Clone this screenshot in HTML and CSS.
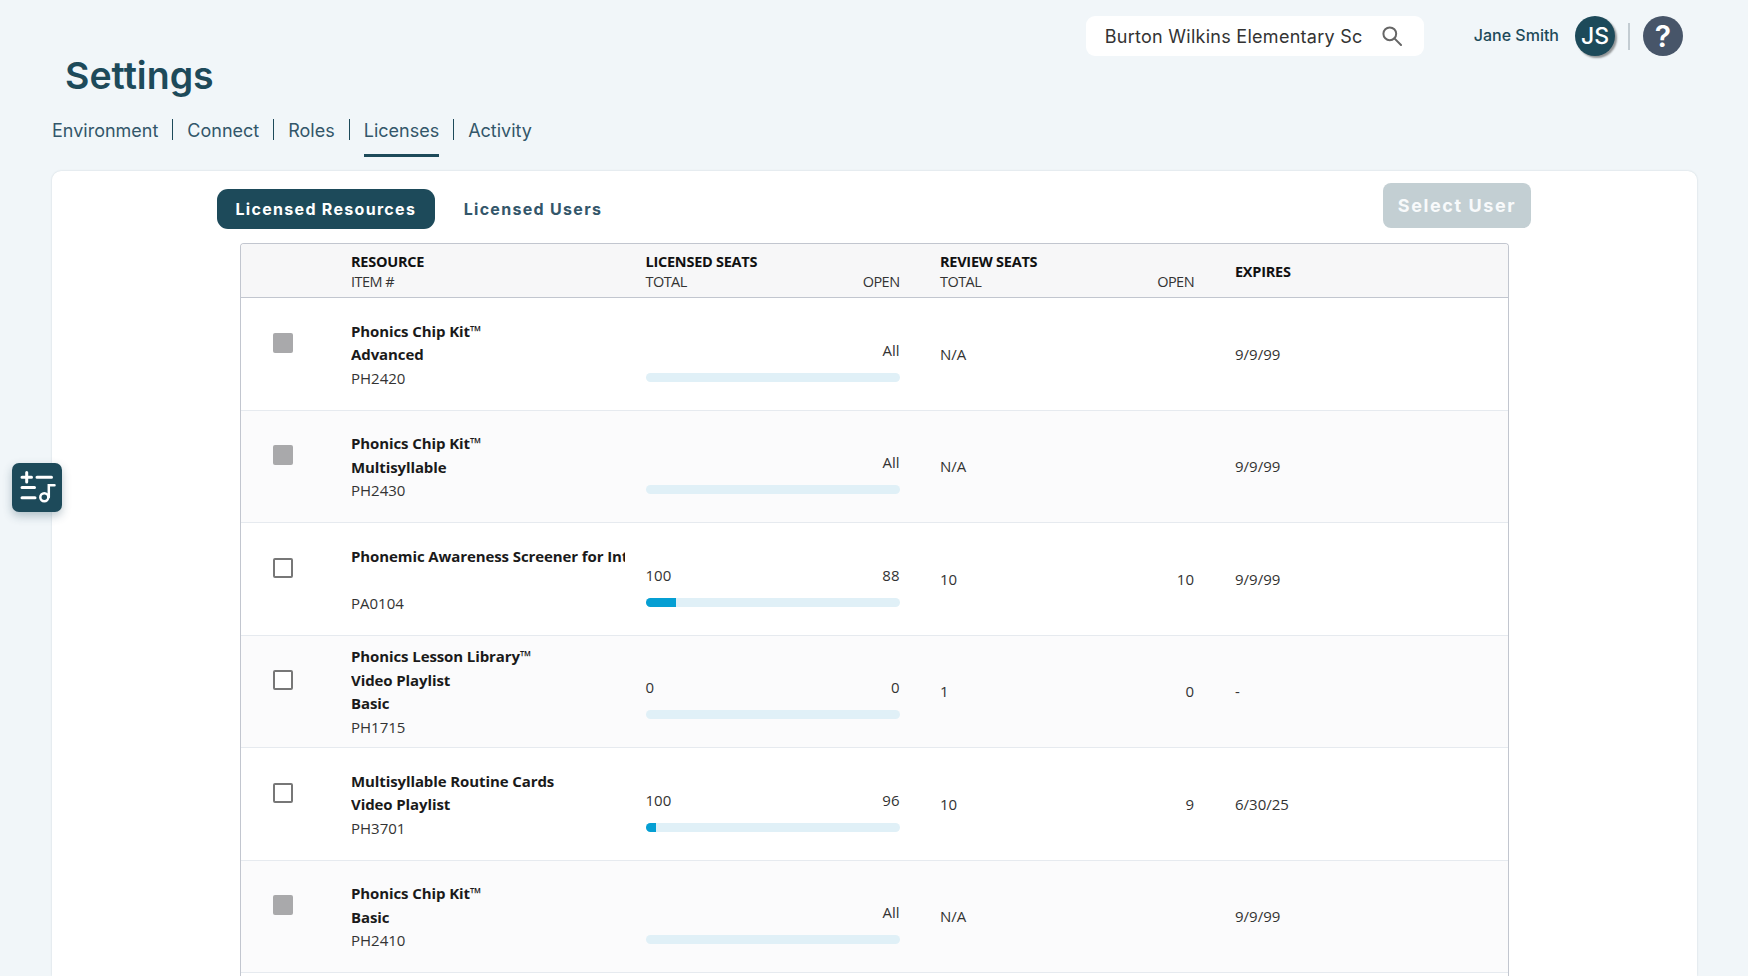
FILE: index.html
```html
<!DOCTYPE html>
<html lang="en">
<head>
<meta charset="utf-8">
<title>Settings</title>
<link rel="stylesheet" href="styles.css">
</head>
<body>
<div class="page">
  <header class="topbar">
    <div class="search">
      <span class="search-text">Burton Wilkins Elementary Sc</span>
      <svg class="search-icon" width="20" height="20" viewBox="0 0 20 20" fill="none" stroke="#666" stroke-width="2"><circle cx="7.800" cy="7.800" r="6.400"/><path d="M12.400 12.400 19 19" stroke-linecap="round"/></svg>
    </div>
    <span class="user-name">Jane Smith</span>
    <span class="avatar">JS</span>
    <span class="divider"></span>
    <span class="help">?</span>
  </header>
  <h1 class="title">Settings</h1>
  <nav class="tabs">
    <a class="tab">Environment</a>
    <a class="tab">Connect</a>
    <a class="tab">Roles</a>
    <a class="tab tab-active">Licenses</a>
    <a class="tab">Activity</a>
  </nav>
  <main class="card">
    <div class="toolbar">
      <div class="segments">
        <span class="segment segment-active">Licensed Resources</span>
        <span class="segment">Licensed Users</span>
      </div>
      <button class="select-user">Select User</button>
    </div>
    <div class="table">
      <div class="row head">
        <div></div>
        <div><div class="h-strong">RESOURCE</div><div class="h-sub">ITEM #</div></div>
        <div></div>
        <div><div class="h-strong">LICENSED SEATS</div><div class="pair h-sub"><span>TOTAL</span><span>OPEN</span></div></div>
        <div></div>
        <div><div class="h-strong">REVIEW SEATS</div><div class="pair h-sub"><span>TOTAL</span><span>OPEN</span></div></div>
        <div></div>
        <div class="h-strong">EXPIRES</div>
      </div>

      <div class="row item">
        <div class="check-cell"><span class="check check-locked"></span></div>
        <div class="res"><div class="name">Phonics Chip Kit™</div><div class="name">Advanced</div><div class="code">PH2420</div></div>
        <div></div>
        <div class="seats"><div class="pair"><span></span><span>All</span></div><div class="track"></div></div>
        <div></div>
        <div class="pair"><span>N/A</span><span></span></div>
        <div></div>
        <div>9/9/99</div>
      </div>

      <div class="row item">
        <div class="check-cell"><span class="check check-locked"></span></div>
        <div class="res"><div class="name">Phonics Chip Kit™</div><div class="name">Multisyllable</div><div class="code">PH2430</div></div>
        <div></div>
        <div class="seats"><div class="pair"><span></span><span>All</span></div><div class="track"></div></div>
        <div></div>
        <div class="pair"><span>N/A</span><span></span></div>
        <div></div>
        <div>9/9/99</div>
      </div>

      <div class="row item">
        <div class="check-cell"><span class="check"></span></div>
        <div class="res"><div class="name">Phonemic Awareness Screener for Intervention</div><div class="name name-empty"></div><div class="code">PA0104</div></div>
        <div></div>
        <div class="seats"><div class="pair"><span>100</span><span>88</span></div><div class="track"><div class="fill" style="width:12%"></div></div></div>
        <div></div>
        <div class="pair"><span>10</span><span>10</span></div>
        <div></div>
        <div>9/9/99</div>
      </div>

      <div class="row item">
        <div class="check-cell"><span class="check"></span></div>
        <div class="res"><div class="name">Phonics Lesson Library™</div><div class="name">Video Playlist</div><div class="name">Basic</div><div class="code">PH1715</div></div>
        <div></div>
        <div class="seats"><div class="pair"><span>0</span><span>0</span></div><div class="track"></div></div>
        <div></div>
        <div class="pair"><span>1</span><span>0</span></div>
        <div></div>
        <div>-</div>
      </div>

      <div class="row item">
        <div class="check-cell"><span class="check"></span></div>
        <div class="res"><div class="name">Multisyllable Routine Cards</div><div class="name">Video Playlist</div><div class="code">PH3701</div></div>
        <div></div>
        <div class="seats"><div class="pair"><span>100</span><span>96</span></div><div class="track"><div class="fill" style="width:4%"></div></div></div>
        <div></div>
        <div class="pair"><span>10</span><span>9</span></div>
        <div></div>
        <div>6/30/25</div>
      </div>

      <div class="row item">
        <div class="check-cell"><span class="check check-locked"></span></div>
        <div class="res"><div class="name">Phonics Chip Kit™</div><div class="name">Basic</div><div class="code">PH2410</div></div>
        <div></div>
        <div class="seats"><div class="pair"><span></span><span>All</span></div><div class="track"></div></div>
        <div></div>
        <div class="pair"><span>N/A</span><span></span></div>
        <div></div>
        <div>9/9/99</div>
      </div>
    </div>
  </main>
</div>
<button class="float-tool" aria-label="Tools">
  <svg width="50" height="49" viewBox="0 0 50 49" fill="none" stroke="#fff" stroke-width="3" stroke-linecap="round"><path d="M10 14.300h9.500M14.700 9.500v9.600M25 14.300h14.500M10 24.600h12.500M10 34.700h13"/><circle cx="32.300" cy="34.300" r="4" stroke-width="2.500"/><path d="M36.800 34V22.300h5.700" stroke-width="2.500"/></svg>
</button>
</body>
</html>
```
FILE: styles.css
```css
* { box-sizing: border-box; }
html, body { margin: 0; height: 100%; overflow: hidden; }
body { background: #f1f6f9; font-family: Inter, "Liberation Sans", sans-serif; color: #1d4a5a; }

.page { display: flex; flex-direction: column; height: 976px; padding: 0 51px 0 52px; }

.topbar { display: flex; align-items: center; justify-content: flex-end; padding: 16px 14px 0 0; }
.search { display: flex; align-items: center; width: 338px; height: 40px; padding: 0 22px 0 19px; margin-right: 50px; background: #fff; border-radius: 9px; }
.search-text { flex: 1; font-size: 18px; color: #333; white-space: nowrap; overflow: hidden; letter-spacing: .27px; }
.search-icon { flex: none; }
.user-name { font-size: 16px; font-weight: 500; color: #1d4a5a; margin: 0 16px 2px 0; }
.avatar { display: flex; align-items: center; justify-content: center; width: 40px; height: 40px; margin-right: 1px; border-radius: 50%; background: #1d4a5a; color: #fff; font-size: 23px; font-weight: 500; box-shadow: 2px 2px 2px rgba(0,0,0,.4); }
.divider { width: 2px; height: 27px; margin: 0 13px 0 12px; background: #c3ccd2; }
.help { display: flex; align-items: center; justify-content: center; width: 40px; height: 40px; border-radius: 50%; background: #475569; color: #fff; font-size: 30px; font-weight: 600; }

.title { margin: 0 0 0 13px; height: 40px; font-size: 37.500px; line-height: 40px; font-weight: 600; color: #1d4a5a; }

.tabs { display: flex; margin-top: 23px; padding-bottom: 31px; }
.tab { position: relative; height: 21px; line-height: 23px; padding-right: 14px; margin-right: 14px; font-size: 18px; color: #33566a; border-right: 1px solid #1d4a5a; }
.tab:last-child { border-right: 0; }
.tab-active::after { content: ""; position: absolute; left: 0; right: 14px; top: 35px; height: 3px; background: #1d4a5a; }

.card { flex: 1; display: flex; flex-direction: column; min-height: 0; padding: 12px 166px 0 165px; background: #fff; border-radius: 9px 9px 0 0; box-shadow: 0 0 2px rgba(30,60,80,.18); }

.toolbar { display: flex; align-items: flex-end; justify-content: space-between; height: 46px; flex: none; }
.segments { display: flex; align-items: center; gap: 28px; }
.segment { font-size: 16px; font-weight: 700; letter-spacing: 1.300px; color: #33566a; white-space: nowrap; }
.segment-active { display: flex; align-items: center; height: 40px; padding: 0 18.500px; margin-right: 1px; background: #1d4a5a; color: #fff; border-radius: 11px; }
.select-user { width: 148px; height: 45px; margin-bottom: 1px; border: 0; border-radius: 8px; background: #c3cfd3; color: #f8fafb; font-family: Inter, sans-serif; font-size: 18px; font-weight: 700; letter-spacing: 1.600px; }

.table { flex: 1; min-height: 0; margin: 14px 22px 0 23px; border: 1px solid #c2c6cf; border-bottom: 0; border-radius: 4px 4px 0 0; overflow: hidden; font-family: "Open Sans", sans-serif; font-size: 15px; color: #333; }

.row { display: grid; grid-template-columns: 110px 273.500px 21px 254px 40.500px 254px 41px 1fr; align-items: center; }
.head { height: 54px; padding-top: 2px; background: #f7f7f8; border-bottom: 1px solid #c2c6cf; line-height: 20px; font-size: 14.500px; }
.h-strong { font-weight: 700; color: #111; letter-spacing: -.25px; }
.h-sub { color: #333; letter-spacing: -.55px; }

.item { height: 112.500px; border-bottom: 1.500px solid #e6eaef; }
.item:nth-child(odd) { background: #fbfbfc; }

.check-cell { display: flex; padding: 0 0 22px 32px; }
.check { width: 20px; height: 20px; border: 2px solid #777; border-radius: 2px; background: #fff; }
.check-locked { border: 0; background: #a9a9ab; }

.res { min-width: 0; padding-top: 2px; line-height: 23.500px; }
.name { height: 23.500px; font-weight: 700; color: #1a1a1a; white-space: nowrap; overflow: hidden; letter-spacing: -.1px; }

.pair { display: flex; justify-content: space-between; }
.seats { padding-top: 14px; line-height: 20px; }
.track { height: 9px; margin-top: 13px; border-radius: 4.500px; background: #e0f0f7; overflow: hidden; }
.fill { height: 100%; background: #059fd3; }

.float-tool { position: absolute; left: 12px; top: 463px; display: flex; align-items: center; justify-content: center; width: 50px; height: 49px; padding: 0; border: 0; border-radius: 7px; background: #1d4a5a; box-shadow: 0 4px 10px rgba(30,70,90,.3); }
```
